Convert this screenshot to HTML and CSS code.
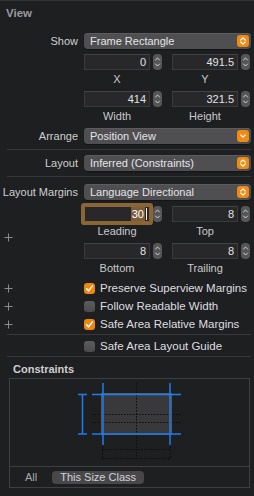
FILE: index.html
```html
<!DOCTYPE html>
<html>
<head>
<meta charset="utf-8">
<link rel="stylesheet" href="styles.css">
</head>
<body>
<div class="panel">
  <div class="title">View</div>

  <div class="row r-show">
    <span class="lbl">Show</span>
    <div class="popup"><span>Frame Rectangle</span><span class="ind"><svg width="12" height="12" viewBox="0 0 12 12"><path d="M3.8 5 L6 2.8 L8.2 5 M3.8 7 L6 9.2 L8.2 7" fill="none" stroke="#fff" stroke-width="1.2" stroke-linecap="round" stroke-linejoin="round"/></svg></span></div>
  </div>

  <div class="row r-xy">
    <span></span>
    <div class="pair">
      <div class="numcell">
        <div class="num">0</div>
        <span class="stepper"><svg width="9" height="16" viewBox="0 0 9 16"><path d="M2.5 6 L4.5 4 L6.5 6 M2.5 10 L4.5 12 L6.5 10" fill="none" stroke="#d6d6d6" stroke-width="1" stroke-linecap="round" stroke-linejoin="round"/></svg></span>
        <span class="cap">X</span>
      </div>
      <div class="numcell">
        <div class="num">491.5</div>
        <span class="stepper"><svg width="9" height="16" viewBox="0 0 9 16"><path d="M2.5 6 L4.5 4 L6.5 6 M2.5 10 L4.5 12 L6.5 10" fill="none" stroke="#d6d6d6" stroke-width="1" stroke-linecap="round" stroke-linejoin="round"/></svg></span>
        <span class="cap">Y</span>
      </div>
    </div>
  </div>

  <div class="row r-wh">
    <span></span>
    <div class="pair">
      <div class="numcell">
        <div class="num">414</div>
        <span class="stepper"><svg width="9" height="16" viewBox="0 0 9 16"><path d="M2.5 6 L4.5 4 L6.5 6 M2.5 10 L4.5 12 L6.5 10" fill="none" stroke="#d6d6d6" stroke-width="1" stroke-linecap="round" stroke-linejoin="round"/></svg></span>
        <span class="cap">Width</span>
      </div>
      <div class="numcell">
        <div class="num">321.5</div>
        <span class="stepper"><svg width="9" height="16" viewBox="0 0 9 16"><path d="M2.5 6 L4.5 4 L6.5 6 M2.5 10 L4.5 12 L6.5 10" fill="none" stroke="#d6d6d6" stroke-width="1" stroke-linecap="round" stroke-linejoin="round"/></svg></span>
        <span class="cap">Height</span>
      </div>
    </div>
  </div>

  <div class="row r-arrange">
    <span class="lbl">Arrange</span>
    <div class="popup"><span>Position View</span><span class="ind"><svg width="12" height="12" viewBox="0 0 12 12"><path d="M3.8 5 L6 7.2 L8.2 5" fill="none" stroke="#fff" stroke-width="1.2" stroke-linecap="round" stroke-linejoin="round"/></svg></span></div>
  </div>

  <div class="sep s1"></div>

  <div class="row r-layout">
    <span class="lbl">Layout</span>
    <div class="popup"><span>Inferred (Constraints)</span><span class="ind"><svg width="12" height="12" viewBox="0 0 12 12"><path d="M3.8 5 L6 2.8 L8.2 5 M3.8 7 L6 9.2 L8.2 7" fill="none" stroke="#fff" stroke-width="1.2" stroke-linecap="round" stroke-linejoin="round"/></svg></span></div>
  </div>

  <div class="sep s2"></div>

  <div class="row r-margins">
    <span class="lbl">Layout Margins</span>
    <div class="popup"><span>Language Directional</span><span class="ind"><svg width="12" height="12" viewBox="0 0 12 12"><path d="M3.8 5 L6 2.8 L8.2 5 M3.8 7 L6 9.2 L8.2 7" fill="none" stroke="#fff" stroke-width="1.2" stroke-linecap="round" stroke-linejoin="round"/></svg></span></div>
  </div>

  <div class="row r-lt">
    <span class="plus-cell"><svg class="plus" width="9" height="9" viewBox="0 0 9 9"><path d="M4.5 0.5 V8.5 M0.5 4.5 H8.5" stroke="#8c8c8e" stroke-width="1"/></svg></span>
    <div class="pair">
      <div class="numcell">
        <div class="num focus"><span class="sel">30</span><span class="caret"></span></div>
        <span class="stepper"><svg width="9" height="16" viewBox="0 0 9 16"><path d="M2.5 6 L4.5 4 L6.5 6 M2.5 10 L4.5 12 L6.5 10" fill="none" stroke="#d6d6d6" stroke-width="1" stroke-linecap="round" stroke-linejoin="round"/></svg></span>
        <span class="cap">Leading</span>
      </div>
      <div class="numcell">
        <div class="num">8</div>
        <span class="stepper"><svg width="9" height="16" viewBox="0 0 9 16"><path d="M2.5 6 L4.5 4 L6.5 6 M2.5 10 L4.5 12 L6.5 10" fill="none" stroke="#d6d6d6" stroke-width="1" stroke-linecap="round" stroke-linejoin="round"/></svg></span>
        <span class="cap">Top</span>
      </div>
    </div>
  </div>

  <div class="row r-bt">
    <span></span>
    <div class="pair">
      <div class="numcell">
        <div class="num">8</div>
        <span class="stepper"><svg width="9" height="16" viewBox="0 0 9 16"><path d="M2.5 6 L4.5 4 L6.5 6 M2.5 10 L4.5 12 L6.5 10" fill="none" stroke="#d6d6d6" stroke-width="1" stroke-linecap="round" stroke-linejoin="round"/></svg></span>
        <span class="cap">Bottom</span>
      </div>
      <div class="numcell">
        <div class="num">8</div>
        <span class="stepper"><svg width="9" height="16" viewBox="0 0 9 16"><path d="M2.5 6 L4.5 4 L6.5 6 M2.5 10 L4.5 12 L6.5 10" fill="none" stroke="#d6d6d6" stroke-width="1" stroke-linecap="round" stroke-linejoin="round"/></svg></span>
        <span class="cap">Trailing</span>
      </div>
    </div>
  </div>

  <div class="checks">
    <div class="crow">
      <span class="pcell"><svg width="9" height="9" viewBox="0 0 9 9"><path d="M4.5 0.5 V8.5 M0.5 4.5 H8.5" stroke="#8c8c8e" stroke-width="1"/></svg></span>
      <span class="cb on"><svg width="11" height="11" viewBox="0 0 11 11"><path d="M2.6 5.8 L4.6 7.9 L8.4 2.9" fill="none" stroke="#fff" stroke-width="1.5" stroke-linecap="round" stroke-linejoin="round"/></svg></span>
      <span class="ctext">Preserve Superview Margins</span>
    </div>
    <div class="crow">
      <span class="pcell"><svg width="9" height="9" viewBox="0 0 9 9"><path d="M4.5 0.5 V8.5 M0.5 4.5 H8.5" stroke="#8c8c8e" stroke-width="1"/></svg></span>
      <span class="cb"></span>
      <span class="ctext">Follow Readable Width</span>
    </div>
    <div class="crow">
      <span class="pcell"><svg width="9" height="9" viewBox="0 0 9 9"><path d="M4.5 0.5 V8.5 M0.5 4.5 H8.5" stroke="#8c8c8e" stroke-width="1"/></svg></span>
      <span class="cb on"><svg width="11" height="11" viewBox="0 0 11 11"><path d="M2.6 5.8 L4.6 7.9 L8.4 2.9" fill="none" stroke="#fff" stroke-width="1.5" stroke-linecap="round" stroke-linejoin="round"/></svg></span>
      <span class="ctext">Safe Area Relative Margins</span>
    </div>
  </div>

  <div class="sep s3"></div>

  <div class="crow guide">
    <span class="pcell"></span>
    <span class="cb"></span>
    <span class="ctext">Safe Area Layout Guide</span>
  </div>

  <div class="sep s4"></div>

  <div class="ctitle">Constraints</div>

  <div class="cbox">
    <div class="diagram">
      <svg width="239" height="87" viewBox="0 0 239 87">
        <g stroke="#0c0c0d" stroke-width="1" stroke-dasharray="1.5 1.5" fill="none">
          <line x1="126.5" y1="4" x2="126.5" y2="80"/>
          <line x1="82" y1="35.5" x2="171" y2="35.5"/>
          <line x1="82" y1="43.5" x2="171" y2="43.5"/>
          <line x1="92" y1="70.5" x2="161" y2="70.5"/>
          <line x1="92" y1="79.5" x2="161" y2="79.5"/>
          <line x1="92.5" y1="65" x2="92.5" y2="80"/>
          <line x1="160.5" y1="65" x2="160.5" y2="80"/>
        </g>
        <rect x="91.5" y="14.5" width="70" height="41" fill="#39393b" stroke="#59595c" stroke-width="1"/>
        <g stroke="#0c0c0d" stroke-width="1" stroke-dasharray="1.5 1.5" fill="none">
          <line x1="126.5" y1="16" x2="126.5" y2="55"/>
          <line x1="93" y1="35.5" x2="160" y2="35.5"/>
          <line x1="93" y1="43.5" x2="160" y2="43.5"/>
        </g>
        <g stroke="#1f7cf2" stroke-width="1.5" fill="none">
          <line x1="93" y1="4" x2="93" y2="66"/>
          <line x1="160" y1="4" x2="160" y2="66"/>
          <line x1="82" y1="15.5" x2="171" y2="15.5"/>
          <line x1="82" y1="55" x2="171" y2="55"/>
          <line x1="72.5" y1="15.5" x2="72.5" y2="55"/>
          <line x1="68" y1="15.5" x2="77" y2="15.5"/>
          <line x1="68" y1="55" x2="77" y2="55"/>
        </g>
      </svg>
    </div>
    <div class="tabs">
      <span class="tab">All</span>
      <span class="tab active">This Size Class</span>
    </div>
  </div>
</div>
</body>
</html>
```

FILE: styles.css
```css
* { box-sizing: border-box; }
html, body {
  margin: 0;
  padding: 0;
  background: #1e1f21;
}
body {
  width: 254px;
  height: 496px;
  overflow: hidden;
  font-family: "Liberation Sans", Arial, sans-serif;
  font-size: 11px;
  color: #d4d4d4;
}
.panel {
  border-top: 1px solid #323235;
  display: flex;
  flex-direction: column;
}
.title {
  font-weight: bold;
  color: #9a9a9c;
  font-size: 11.5px;
  line-height: 12px;
  padding: 6px 0 0 6px;
}
.row {
  display: grid;
  grid-template-columns: 78px 167px;
  column-gap: 6px;
  align-items: center;
}
.lbl {
  text-align: right;
  color: #cfcfd1;
  white-space: nowrap;
  line-height: 16px;
}
.r-show { margin-top: 14px; }
.r-xy { margin-top: 5px; }
.r-wh { margin-top: 6px; }
.r-arrange { margin-top: 6px; }
.r-layout { margin-top: 0; }
.r-margins { margin-top: 0; }
.r-lt { margin-top: 6px; align-items: start; }
.r-bt { margin-top: 6px; }

.popup {
  height: 16px;
  border-radius: 4px;
  background: #4f4f52;
  box-shadow: inset 0 1px 0 #5c5c5f, 0 1px 1px rgba(0,0,0,0.35);
  display: flex;
  align-items: center;
  justify-content: space-between;
  padding: 0 2px 0 6px;
  color: #e4e4e6;
  white-space: nowrap;
}
.ind {
  width: 12px;
  height: 12px;
  border-radius: 3px;
  background: #ef8a12;
  display: flex;
}
.pair {
  display: grid;
  grid-template-columns: 78px 78px;
  column-gap: 10px;
}
.numcell {
  display: grid;
  grid-template-columns: 66px 9px;
  column-gap: 3px;
}
.num {
  height: 16px;
  background: #28282b;
  border: 1px solid #3a3a3d;
  border-top-color: #434346;
  text-align: right;
  padding-right: 3px;
  line-height: 14px;
  color: #e2e2e4;
}
.num.focus {
  box-shadow: 0 0 0 3px #8a6634;
  border-color: #8a6634;
  border-radius: 1px;
  display: flex;
  justify-content: flex-end;
  align-items: center;
  padding-right: 2px;
}
.sel {
  background: #7d5c3b;
  color: #ffffff;
  line-height: 14px;
  padding: 0 1px;
}
.caret {
  width: 1px;
  height: 12px;
  background: #f0f0f0;
  margin-left: 1px;
}
.stepper {
  width: 9px;
  height: 16px;
  border-radius: 4px;
  background: #565659;
  display: flex;
}
.cap {
  grid-column: 1;
  text-align: center;
  color: #c9c9cb;
  line-height: 12px;
  margin-top: 3px;
}
.plus-cell {
  display: flex;
  margin-top: 27px;
  margin-bottom: -30px;
  padding-left: 4px;
}
.sep {
  height: 1px;
  background: #38383b;
  margin-left: 7px;
  width: 244px;
}
.s1 { margin-top: 5px; margin-bottom: 5px; }
.s2 { margin-top: 5px; margin-bottom: 7px; }
.s3 { margin-top: 1px; }
.s4 { margin-top: 1px; }
.checks {
  margin-top: 5px;
  display: flex;
  flex-direction: column;
}
.crow {
  height: 18px;
  display: flex;
  align-items: center;
}
.guide { margin-top: 2px; }
.pcell {
  width: 84px;
  padding-left: 4px;
  display: flex;
}
.cb {
  width: 11px;
  height: 11px;
  border-radius: 3px;
  background: linear-gradient(#5d5d60, #4a4a4d);
  display: flex;
  flex: none;
}
.cb.on {
  background: #f0860e;
}
.ctext {
  margin-left: 5px;
  color: #dedee0;
  font-size: 11.5px;
  white-space: nowrap;
}
.ctitle {
  font-weight: bold;
  color: #cfcfd1;
  line-height: 12px;
  margin-top: 6px;
  padding-left: 13px;
}
.cbox {
  margin: 3px 0 0 9px;
  width: 241px;
  height: 110px;
  border: 1px solid #3f3f42;
  display: flex;
  flex-direction: column;
}
.diagram {
  height: 87px;
  display: flex;
}
.tabs {
  flex: 1;
  border-top: 1px solid #3f3f42;
  display: flex;
  align-items: center;
  padding-left: 15px;
  gap: 15px;
}
.tab {
  color: #a9a9ab;
  line-height: 13px;
  white-space: nowrap;
}
.tab.active {
  background: #48484b;
  color: #d3d3d5;
  border-radius: 4px;
  padding: 0 8px;
  min-width: 88px;
  text-align: center;
}
```
